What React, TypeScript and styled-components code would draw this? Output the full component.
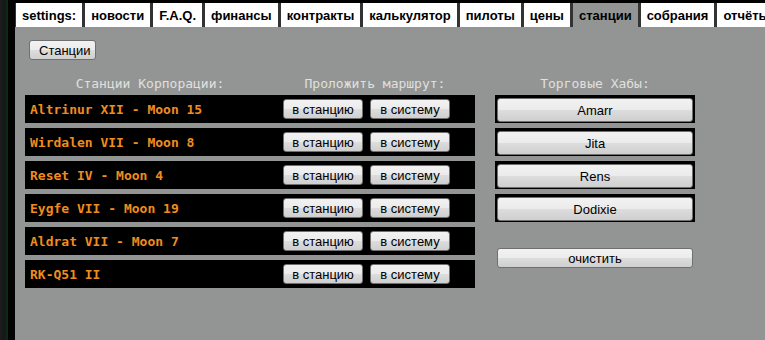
import React from 'react';
import styled, { createGlobalStyle } from 'styled-components';

const GlobalStyle = createGlobalStyle`
  html, body {
    margin: 0;
    padding: 0;
    background: #0a0a0a;
    overflow: hidden;
  }
  body {
    font-family: "Liberation Sans", Arial, sans-serif;
  }
`;

const Page = styled.div`
  display: flex;
  width: 765px;
  height: 340px;
  overflow: hidden;
`;

const SideStrip = styled.div`
  flex: 0 0 15px;
  background: linear-gradient(
    to right,
    #1d1d1d 0px,
    #161616 5px,
    #0c2a16 6px,
    #0c2a16 8px,
    #040404 8px,
    #040404 15px
  );
`;

const Main = styled.div`
  flex: 1;
  display: flex;
  flex-direction: column;
  min-width: 0;
`;

const TabBar = styled.div`
  display: flex;
  height: 24px;
  background: #333333;
  border-top: 3px solid #000000;
  padding-left: 1px;
  gap: 3px;
  white-space: nowrap;
  overflow: hidden;
`;

const Tab = styled.div<{ $active?: boolean }>`
  flex: 0 0 auto;
  display: flex;
  align-items: center;
  padding: 0 6px;
  background: ${(p) => (p.$active ? '#929593' : '#ffffff')};
  color: #000000;
  font: bold 13px "Liberation Sans", Arial, sans-serif;
`;

const Panel = styled.div`
  flex: 1;
  background: #929593;
  padding: 13px 0 0 10px;
`;

const Button = styled.button<{ $wide?: boolean; $tall?: boolean }>`
  box-sizing: border-box;
  height: ${(p) => (p.$tall ? '24px' : '20px')};
  width: ${(p) => (p.$wide ? '100%' : 'auto')};
  padding: 0 9px;
  border: 1px solid #707070;
  border-radius: 3px;
  background: linear-gradient(to bottom, #f2f2f2 0%, #ebebeb 50%, #dddddd 50%, #cfcfcf 100%);
  color: #000000;
  font: 13px "Liberation Sans", Arial, sans-serif;
  line-height: 1;
  cursor: pointer;
`;

const TopButton = styled(Button)`
  margin-left: 4px;
  width: 67px;
`;

const Content = styled.div`
  display: flex;
  gap: 20px;
  margin-top: 16px;
`;

const StationTable = styled.div`
  display: grid;
  grid-template-columns: 250px 200px;
  row-gap: 5px;
`;

const HeaderCell = styled.div`
  height: 16px;
  text-align: center;
  color: #e0e0e0;
  font: 13px "DejaVu Sans Mono", "Liberation Mono", monospace;
  line-height: 16px;
  margin-bottom: -2px;
`;

const NameCell = styled.div`
  height: 28px;
  display: flex;
  align-items: center;
  padding-left: 5px;
  background: #000000;
  color: #f08c1e;
  font: bold 13px "DejaVu Sans Mono", "Liberation Mono", monospace;
  white-space: pre;
`;

const RouteCell = styled.div`
  height: 28px;
  display: flex;
  align-items: center;
  gap: 7px;
  padding-left: 8px;
  background: #000000;
`;

const RouteButton = styled(Button)`
  width: 80px;
  padding: 0;
`;

const HubColumn = styled.div`
  width: 200px;
  display: flex;
  flex-direction: column;
  gap: 5px;
`;

const HubBox = styled.div`
  box-sizing: border-box;
  height: 28px;
  padding: 3px 2px 1px;
  background: #000000;
`;

const ClearRow = styled.div`
  margin-top: 21px;
  padding: 0 2px;
`;

const stations = [
  'Altrinur XII - Moon 15',
  'Wirdalen VII - Moon 8',
  'Reset IV - Moon 4',
  'Eygfe VII - Moon 19',
  'Aldrat VII - Moon 7',
  'RK-Q51 II',
];

const hubs = ['Amarr', 'Jita', 'Rens', 'Dodixie'];

const tabs = [
  'settings:',
  'новости',
  'F.A.Q.',
  'финансы',
  'контракты',
  'калькулятор',
  'пилоты',
  'цены',
  'станции',
  'собрания',
  'отчёты',
];

const App: React.FC = () => {
  return (
    <>
      <GlobalStyle />
      <Page>
        <SideStrip />
        <Main>
          <TabBar>
            {tabs.map((t) => (
              <Tab key={t} $active={t === 'станции'}>
                {t}
              </Tab>
            ))}
          </TabBar>
          <Panel>
            <TopButton>Станции</TopButton>
            <Content>
              <StationTable>
                <HeaderCell>Станции Корпорации:</HeaderCell>
                <HeaderCell>Проложить маршрут:</HeaderCell>
                {stations.map((s) => (
                  <React.Fragment key={s}>
                    <NameCell>{s}</NameCell>
                    <RouteCell>
                      <RouteButton>в станцию</RouteButton>
                      <RouteButton>в систему</RouteButton>
                    </RouteCell>
                  </React.Fragment>
                ))}
              </StationTable>
              <HubColumn>
                <HeaderCell>Торговые Хабы:</HeaderCell>
                {hubs.map((h) => (
                  <HubBox key={h}>
                    <Button $wide $tall>
                      {h}
                    </Button>
                  </HubBox>
                ))}
                <ClearRow>
                  <Button $wide>очистить</Button>
                </ClearRow>
              </HubColumn>
            </Content>
          </Panel>
        </Main>
      </Page>
    </>
  );
};

export default App;
